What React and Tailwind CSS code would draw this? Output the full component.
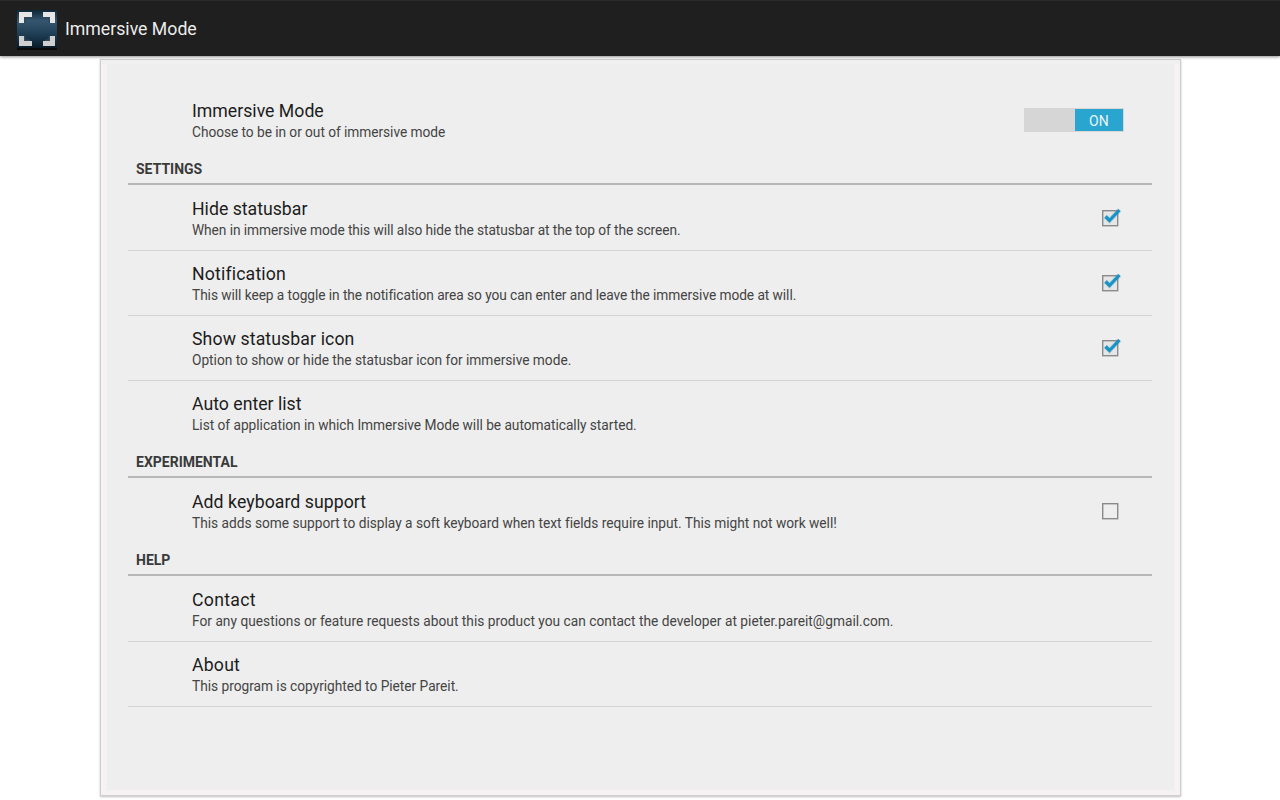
const sans = "font-['Roboto',sans-serif]";

function AppIcon() {
  return (
    <svg width="42" height="42" viewBox="0 0 42 42" className="shrink-0">
      <defs>
        <linearGradient id="bg" x1="0" y1="0" x2="0" y2="1">
          <stop offset="0" stopColor="#0e2636" />
          <stop offset="0.28" stopColor="#35566e" />
          <stop offset="0.62" stopColor="#1f3f56" />
          <stop offset="1" stopColor="#081a27" />
        </linearGradient>
      </defs>
      <rect x="1" y="2" width="40" height="38" fill="url(#bg)" />
      <rect x="1" y="40" width="40" height="2" fill="#0a0a0a" />
      <g fill="#e6e6e6">
        <path d="M3 4H16V9H8V15H3Z" />
        <path d="M39 4H27V9H34V15H39Z" />
      </g>
      <g fill="#cfcfcf">
        <path d="M3 38H16V33H8V28H3Z" />
        <path d="M39 38H27V33H34V28H39Z" />
      </g>
      <g fill="#31495b">
        <path d="M8 9H14V10.5H9.5V15H8Z" />
        <path d="M34 9H29V10.5H32.5V15H34Z" />
        <path d="M8 33H14V31.5H9.5V28H8Z" />
        <path d="M34 33H29V31.5H32.5V28H34Z" />
      </g>
    </svg>
  );
}

function Check({ checked }) {
  return (
    <svg width="24" height="24" viewBox="0 0 24 24" className="block">
      <rect x="3.7" y="4.7" width="15" height="15" fill={checked ? "#e6e6e6" : "none"} stroke="#8a8a8a" strokeWidth="1.4" />
      {checked && (
        <>
          <path d="M6.5 10.5L10.5 14.5L20.5 4" fill="none" stroke="#1b93c4" strokeOpacity="0.2" strokeWidth="5" />
          <path d="M6.5 10.5L10.5 14.5L20.5 4" fill="none" stroke="#1a92c4" strokeWidth="3.2" />
        </>
      )}
    </svg>
  );
}

function Toggle() {
  return (
    <div className="flex h-6 w-[100px] items-stretch justify-end bg-[#d6d6d6] py-px pr-px">
      <div className="flex w-12 items-center justify-center bg-[#2aa5cf] pt-[2px] text-sm tracking-[0.3px] text-[#e8f5fa]">ON</div>
    </div>
  );
}

function Row({ title, sub, titleFit = "", subFit = "", divider = true, control }) {
  return (
    <div className={`flex h-[65px] ${divider ? "border-b border-[#d4d4d4]" : ""}`}>
      <div className="flex-1 pl-16 pt-3">
        <div className={`text-[17.7px] leading-[22px] text-[#1c1c1c] ${titleFit}`}>{title}</div>
        <div className={`mt-px text-[13.72px] leading-[18px] text-[#444444] ${subFit}`}>{sub}</div>
      </div>
      {control}
    </div>
  );
}

function Header({ children }) {
  return (
    <div className="mb-px flex h-8 items-center border-b-2 border-[#b8b8b8] px-2 pt-px text-sm font-bold leading-4 text-[#3a3a3a]">
      {children}
    </div>
  );
}

const checkSlot = (checked) => (
  <div className={`mr-[29px] shrink-0 self-center ${checked ? "" : "mb-px"}`}><Check checked={checked} /></div>
);

export default function App() {
  return (
    <div className={`flex h-[800px] w-[1280px] flex-col overflow-hidden bg-white ${sans}`}>
      <div className="relative z-10 flex h-14 shrink-0 items-center gap-[7px] border-t border-[#2a2a2a] bg-[#1f1f1f] pl-4 shadow-[0_1px_3px_rgba(0,0,0,0.45)]">
        <AppIcon />
        <span className="pt-[2px] text-[17.7px] text-[#ececec]">Immersive Mode</span>
      </div>
      <div className="ml-[100px] mt-[3px] flex h-[737px] w-[1081px] flex-col border border-[#d0cecf] bg-[#f6f2f4] shadow-[0_1px_2px_rgba(0,0,0,0.25)]">
        <div className="h-1 shrink-0 bg-[#f0f0f0]" />
        <div className="flex-1 px-[6px] pb-[5px]">
          <div className="h-full bg-[#eeeeee] pl-[21px] pr-[22px] pt-6">
            <Row
              title="Immersive Mode"
              sub="Choose to be in or out of immersive mode"
              subFit="tracking-[-0.05px]"
              divider={false}
              control={<div className="mr-7 mt-5 shrink-0"><Toggle /></div>}
            />
            <Header>SETTINGS</Header>
            <Row title="Hide statusbar" sub="When in immersive mode this will also hide the statusbar at the top of the screen." subFit="tracking-[-0.07px]" control={checkSlot(true)} />
            <Row title="Notification" titleFit="tracking-[0.16px]" sub="This will keep a toggle in the notification area so you can enter and leave the immersive mode at will." subFit="tracking-[-0.06px]" control={checkSlot(true)} />
            <Row title="Show statusbar icon" titleFit="tracking-[0.1px]" sub="Option to show or hide the statusbar icon for immersive mode." subFit="tracking-[-0.016px]" control={checkSlot(true)} />
            <Row title="Auto enter list" sub="List of application in which Immersive Mode will be automatically started." subFit="tracking-[-0.027px]" divider={false} />
            <Header>EXPERIMENTAL</Header>
            <Row title="Add keyboard support" titleFit="tracking-[0.05px]" sub="This adds some support to display a soft keyboard when text fields require input. This might not work well!" subFit="tracking-[-0.01px]" divider={false} control={checkSlot(false)} />
            <Header>HELP</Header>
            <Row title="Contact" titleFit="tracking-[0.28px]" sub="For any questions or feature requests about this product you can contact the developer at pieter.pareit@gmail.com." subFit="tracking-[0.017px]" />
            <Row title="About" titleFit="tracking-[0.2px]" sub="This program is copyrighted to Pieter Pareit." subFit="tracking-[-0.02px]" />
          </div>
        </div>
      </div>
    </div>
  );
}
